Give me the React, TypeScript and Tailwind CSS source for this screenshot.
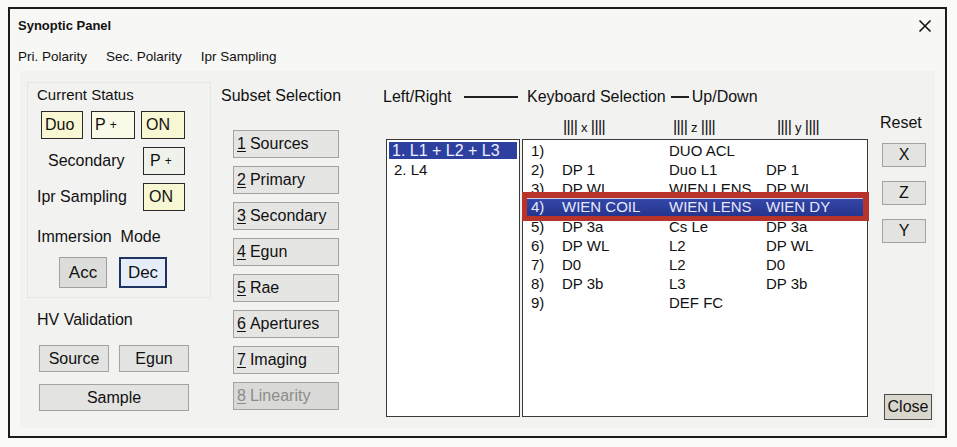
import React from "react";

const font = { fontFamily: '"Liberation Sans", Arial, sans-serif' };

const StatusBox = ({
  children,
  tone = "yellow",
  w = "w-[44px]",
  pl = "pl-[3px]",
}: {
  children: React.ReactNode;
  tone?: "yellow" | "pale" | "green";
  w?: string;
  pl?: string;
}) => {
  const bg =
    tone === "yellow" ? "bg-[#f8f7d3]" : tone === "pale" ? "bg-[#fafae8]" : "bg-[#eef2ea]";
  return (
    <div className={`${w} h-[28px] ${bg} border border-[#2a2a2a] flex items-center ${pl} text-[16px] text-[#111]`}>
      {children}
    </div>
  );
};

const PPlus = () => (
  <span>
    P<span className="text-[12px] ml-[4px] align-[1px]">+</span>
  </span>
);

const GrayButton = ({ children, className = "" }: { children: React.ReactNode; className?: string }) => (
  <div
    className={`bg-[#e3e3e1] border border-[#a3a3a1] flex items-center justify-center text-[16px] text-[#111] ${className}`}
  >
    {children}
  </div>
);

const subsets = [
  ["1", "Sources"],
  ["2", "Primary"],
  ["3", "Secondary"],
  ["4", "Egun"],
  ["5", "Rae"],
  ["6", "Apertures"],
  ["7", "Imaging"],
  ["8", "Linearity"],
];

const rows: [string, string, string, string][] = [
  ["1)", "", "DUO ACL", ""],
  ["2)", "DP 1", "Duo L1", "DP 1"],
  ["3)", "DP WL", "WIEN LENS", "DP WL"],
  ["4)", "WIEN COIL", "WIEN LENS", "WIEN DY"],
  ["5)", "DP 3a", "Cs Le", "DP 3a"],
  ["6)", "DP WL", "L2", "DP WL"],
  ["7)", "D0", "L2", "D0"],
  ["8)", "DP 3b", "L3", "DP 3b"],
  ["9)", "", "DEF FC", ""],
];

const RowCells = ({ r }: { r: [string, string, string, string] }) => (
  <>
    <span className="w-[31px]">{r[0]}</span>
    <span className="w-[107px]">{r[1]}</span>
    <span className="w-[97px]">{r[2]}</span>
    <span>{r[3]}</span>
  </>
);

export default function App() {
  return (
    <div className="w-[957px] h-[447px] bg-[#fafaf9] pt-[7px] pl-[8px] overflow-hidden" style={font}>
      <div className="w-[939px] h-[431px] border-2 border-[#1c1c1c] bg-[#f7f7f5] flex flex-col">
        {/* title */}
        <div className="h-[34px] flex items-center justify-between pl-[8px] pr-[13px]">
          <span className="text-[13px] font-bold text-[#111]">Synoptic Panel</span>
          <svg width="14" height="14" viewBox="0 0 14 14">
            <path d="M1.5 1.5 L12.5 12.5 M12.5 1.5 L1.5 12.5" stroke="#111" strokeWidth="1.6" />
          </svg>
        </div>
        {/* menu */}
        <div className="h-[28px] flex items-center gap-[19px] pl-[8px] text-[13.5px] text-[#111]">
          <span>Pri. Polarity</span>
          <span>Sec. Polarity</span>
          <span>Ipr Sampling</span>
        </div>
        {/* panel */}
        <div className="mx-[10px] h-[357px] bg-[#f2f2f0] flex text-[#111]">
          {/* column A */}
          <div className="ml-[8px] w-[182px] flex flex-col">
            <div className="mt-[12px] ring-1 ring-[#e6e6e4] pb-[9px]">
              <div className="mt-[3px] pl-[9px] h-[18px] leading-[18px] text-[15px]">Current Status</div>
              <div className="mt-[7px] flex">
                <div className="ml-[13px]">
                  <StatusBox w="w-[42px]">Duo</StatusBox>
                </div>
                <div className="ml-[8px]">
                  <StatusBox tone="pale">
                    <PPlus />
                  </StatusBox>
                </div>
                <div className="ml-[6px]">
                  <StatusBox pl="pl-[4px]">ON</StatusBox>
                </div>
              </div>
              <div className="mt-[8px] flex items-center">
                <div className="w-[115px] pl-[20px] text-[16px]">Secondary</div>
                <StatusBox tone="green" w="w-[42px]" pl="pl-[6px]">
                  <PPlus />
                </StatusBox>
              </div>
              <div className="mt-[8px] flex items-center">
                <div className="w-[115px] pl-[9px] text-[16px]">Ipr Sampling</div>
                <StatusBox w="w-[42px]" pl="pl-[5px]">
                  ON
                </StatusBox>
              </div>
              <div className="mt-[17px] pl-[9px] h-[18px] leading-[18px] text-[16px]">
                Immersion&nbsp; Mode
              </div>
              <div className="mt-[11px] flex">
                <div className="ml-[31px] w-[48px] h-[31px] bg-[#dcdcda] border border-[#a0a0a0] flex items-center justify-center text-[17px]">
                  Acc
                </div>
                <div className="ml-[12px] w-[48px] h-[31px] bg-[#e5eef8] border-2 border-[#1f3561] flex items-center justify-center text-[17px]">
                  Dec
                </div>
              </div>
            </div>
            <div className="mt-[14px] pl-[9px] h-[18px] leading-[18px] text-[16px]">HV Validation</div>
            <div className="mt-[16px] flex">
              <GrayButton className="ml-[11px] w-[70px] h-[27px]">Source</GrayButton>
              <GrayButton className="ml-[10px] w-[70px] h-[27px]">Egun</GrayButton>
            </div>
            <GrayButton className="mt-[12px] ml-[11px] w-[150px] h-[27px]">Sample</GrayButton>
          </div>

          {/* column B */}
          <div className="w-[150px] flex flex-col">
            <div className="mt-[16px] pl-[11px] h-[18px] leading-[18px] text-[16px]">Subset Selection</div>
            <div className="mt-[25px] ml-[23px] flex flex-col gap-[8px]">
              {subsets.map(([n, label]) => {
                const off = n === "8";
                return (
                  <div
                    key={n}
                    className={`w-[106px] h-[28px] border border-[#a3a3a1] flex items-center pl-[3px] text-[16px] ${
                      off ? "bg-[#d9d9d7] text-[#8c8c8a]" : "bg-[#e5e5e3] text-[#111]"
                    }`}
                  >
                    <span className="underline underline-offset-[2px]">{n}</span>
                    <span className="ml-[4px]">{label}</span>
                  </div>
                );
              })}
            </div>
          </div>

          {/* column C */}
          <div className="w-[510px] flex flex-col">
            <div className="mt-[17px] pl-[23px] h-[18px] flex items-center text-[16px]">
              <span className="w-[81px]">Left/Right</span>
              <span className="w-[54px] h-[1.5px] bg-[#222]" />
              <span className="ml-[9px]">Keyboard Selection</span>
              <span className="ml-[5px] w-[18px] h-[1.5px] bg-[#222]" />
              <span className="ml-[3px]">Up/Down</span>
            </div>
            <div className="mt-[12px] h-[18px] flex items-center text-[16px] tracking-[-0.6px]">
              <span className="ml-[203px] w-[110px]">
                |||| <span className="text-[13px]">x</span> ||||
              </span>
              <span className="w-[104px]">
                |||| <span className="text-[13px]">z</span> ||||
              </span>
              <span>
                |||| <span className="text-[13px]">y</span> ||||
              </span>
            </div>
            <div className="mt-[3px] flex">
              <div className="ml-[26px] w-[134px] h-[278px] bg-white border border-[#3a3a3a] px-[2px] pt-[2px]">
                <div className="h-[17px] bg-[#2d3f9f] text-[#eef0ff] flex items-center pl-[3px] text-[16px]">
                  1. L1 + L2 + L3
                </div>
                <div className="mt-[2px] h-[18px] flex items-center pl-[5px] text-[15px]">2. L4</div>
              </div>
              <div className="ml-[2px] w-[346px] h-[278px] bg-white border border-[#3a3a3a] pt-[2px] text-[15px]">
                {rows.map((r, i) =>
                  i === 3 ? (
                    <div key={i} className="relative h-[19px]">
                      <div className="absolute top-[-7px] left-[-1px] right-[-2px] h-[29px] bg-[#b8342a] pt-[6px] pb-[5px] pl-[5px] pr-[6px]">
                        <div className="h-full bg-gradient-to-b from-[#3446a8] to-[#25358e] border-t border-[#c9cbe8] flex items-center pl-[4px] text-[#e6e9ff]">
                          <RowCells r={r} />
                        </div>
                      </div>
                    </div>
                  ) : (
                    <div key={i} className="h-[19px] flex items-center pl-[8px]">
                      <RowCells r={r} />
                    </div>
                  )
                )}
              </div>
            </div>
          </div>

          {/* column D */}
          <div className="w-[65px] flex flex-col">
            <div className="mt-[43px] pl-[10px] h-[18px] leading-[18px] text-[16px]">Reset</div>
            <GrayButton className="mt-[11px] ml-[12px] w-[44px] h-[24px]">X</GrayButton>
            <GrayButton className="mt-[14px] ml-[12px] w-[44px] h-[24px]">Z</GrayButton>
            <GrayButton className="mt-[14px] ml-[12px] w-[44px] h-[24px]">Y</GrayButton>
            <div className="mt-auto mb-[8px] ml-[14px] w-[48px] h-[26px] bg-[#d9d7cd] border border-[#4a4a48] flex items-center justify-center text-[16px]">
              Close
            </div>
          </div>
        </div>
      </div>
    </div>
  );
}
